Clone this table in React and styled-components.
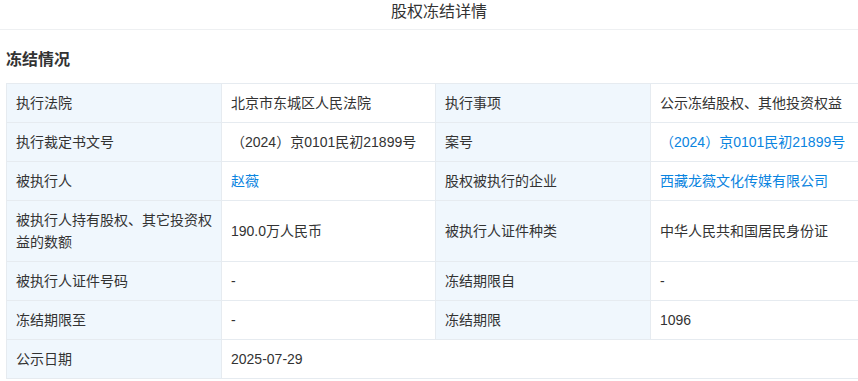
import React from "react";
import styled, { createGlobalStyle } from "styled-components";

const Global = createGlobalStyle`
  html, body { margin: 0; padding: 0; background: #fff; }
  body {
    font-family: "Liberation Sans", Arial, "Noto Sans CJK SC", sans-serif;
    color: #333;
    overflow: hidden;
  }
`;

const Page = styled.div`
  width: 858px;
  height: 381px;
  overflow: hidden;
  display: flex;
  flex-direction: column;
`;

const TitleBar = styled.div`
  height: 30px;
  box-sizing: border-box;
  border-bottom: 1px solid #eef0f2;
  display: flex;
  justify-content: center;
  padding-left: 20px;
  font-size: 16px;
  line-height: 24px;
  color: #333;
`;

const Body = styled.div`
  padding-left: 6px;
`;

const SectionTitle = styled.h2`
  margin: 0;
  height: 53px;
  display: flex;
  align-items: center;
  font-size: 16px;
  font-weight: bold;
  color: #333;
  padding-top: 2px;
  box-sizing: border-box;
`;

const Grid = styled.div`
  display: grid;
  grid-template-columns: 215px 214px 215px 215px;
  width: 859px;
  border-top: 1px solid #e6ebf0;
  border-left: 1px solid #e6ebf0;
  font-size: 14px;
  line-height: 22px;
`;

const Cell = styled.div`
  box-sizing: border-box;
  padding: 8px 8px 8px 9px;
  border-right: 1px solid #e6ebf0;
  border-bottom: 1px solid #e6ebf0;
  background: ${(p) => (p.$label ? "#f0f7fd" : "#fff")};
  color: ${(p) => (p.$link ? "#0a84e0" : "#333")};
  grid-column: ${(p) => (p.$span ? `span ${p.$span}` : "auto")};
  display: flex;
  align-items: center;
`;

const rows = [
  [["执行法院"], ["北京市东城区人民法院"], ["执行事项"], ["公示冻结股权、其他投资权益"]],
  [["执行裁定书文号"], ["（2024）京0101民初21899号"], ["案号"], ["（2024）京0101民初21899号", true]],
  [["被执行人"], ["赵薇", true], ["股权被执行的企业"], ["西藏龙薇文化传媒有限公司", true]],
  [["被执行人持有股权、其它投资权益的数额"], ["190.0万人民币"], ["被执行人证件种类"], ["中华人民共和国居民身份证"]],
  [["被执行人证件号码"], ["-"], ["冻结期限自"], ["-"]],
  [["冻结期限至"], ["-"], ["冻结期限"], ["1096"]],
];

export default function App() {
  return (
    <>
      <Global />
      <Page>
        <TitleBar>股权冻结详情</TitleBar>
        <Body>
          <SectionTitle>冻结情况</SectionTitle>
          <Grid>
            {rows.map((r, i) =>
              r.map((c, j) => (
                <Cell key={`${i}-${j}`} $label={j % 2 === 0} $link={c[1]}>
                  {c[0]}
                </Cell>
              ))
            )}
            <Cell $label>公示日期</Cell>
            <Cell $span={3}>2025-07-29</Cell>
          </Grid>
        </Body>
      </Page>
    </>
  );
}
